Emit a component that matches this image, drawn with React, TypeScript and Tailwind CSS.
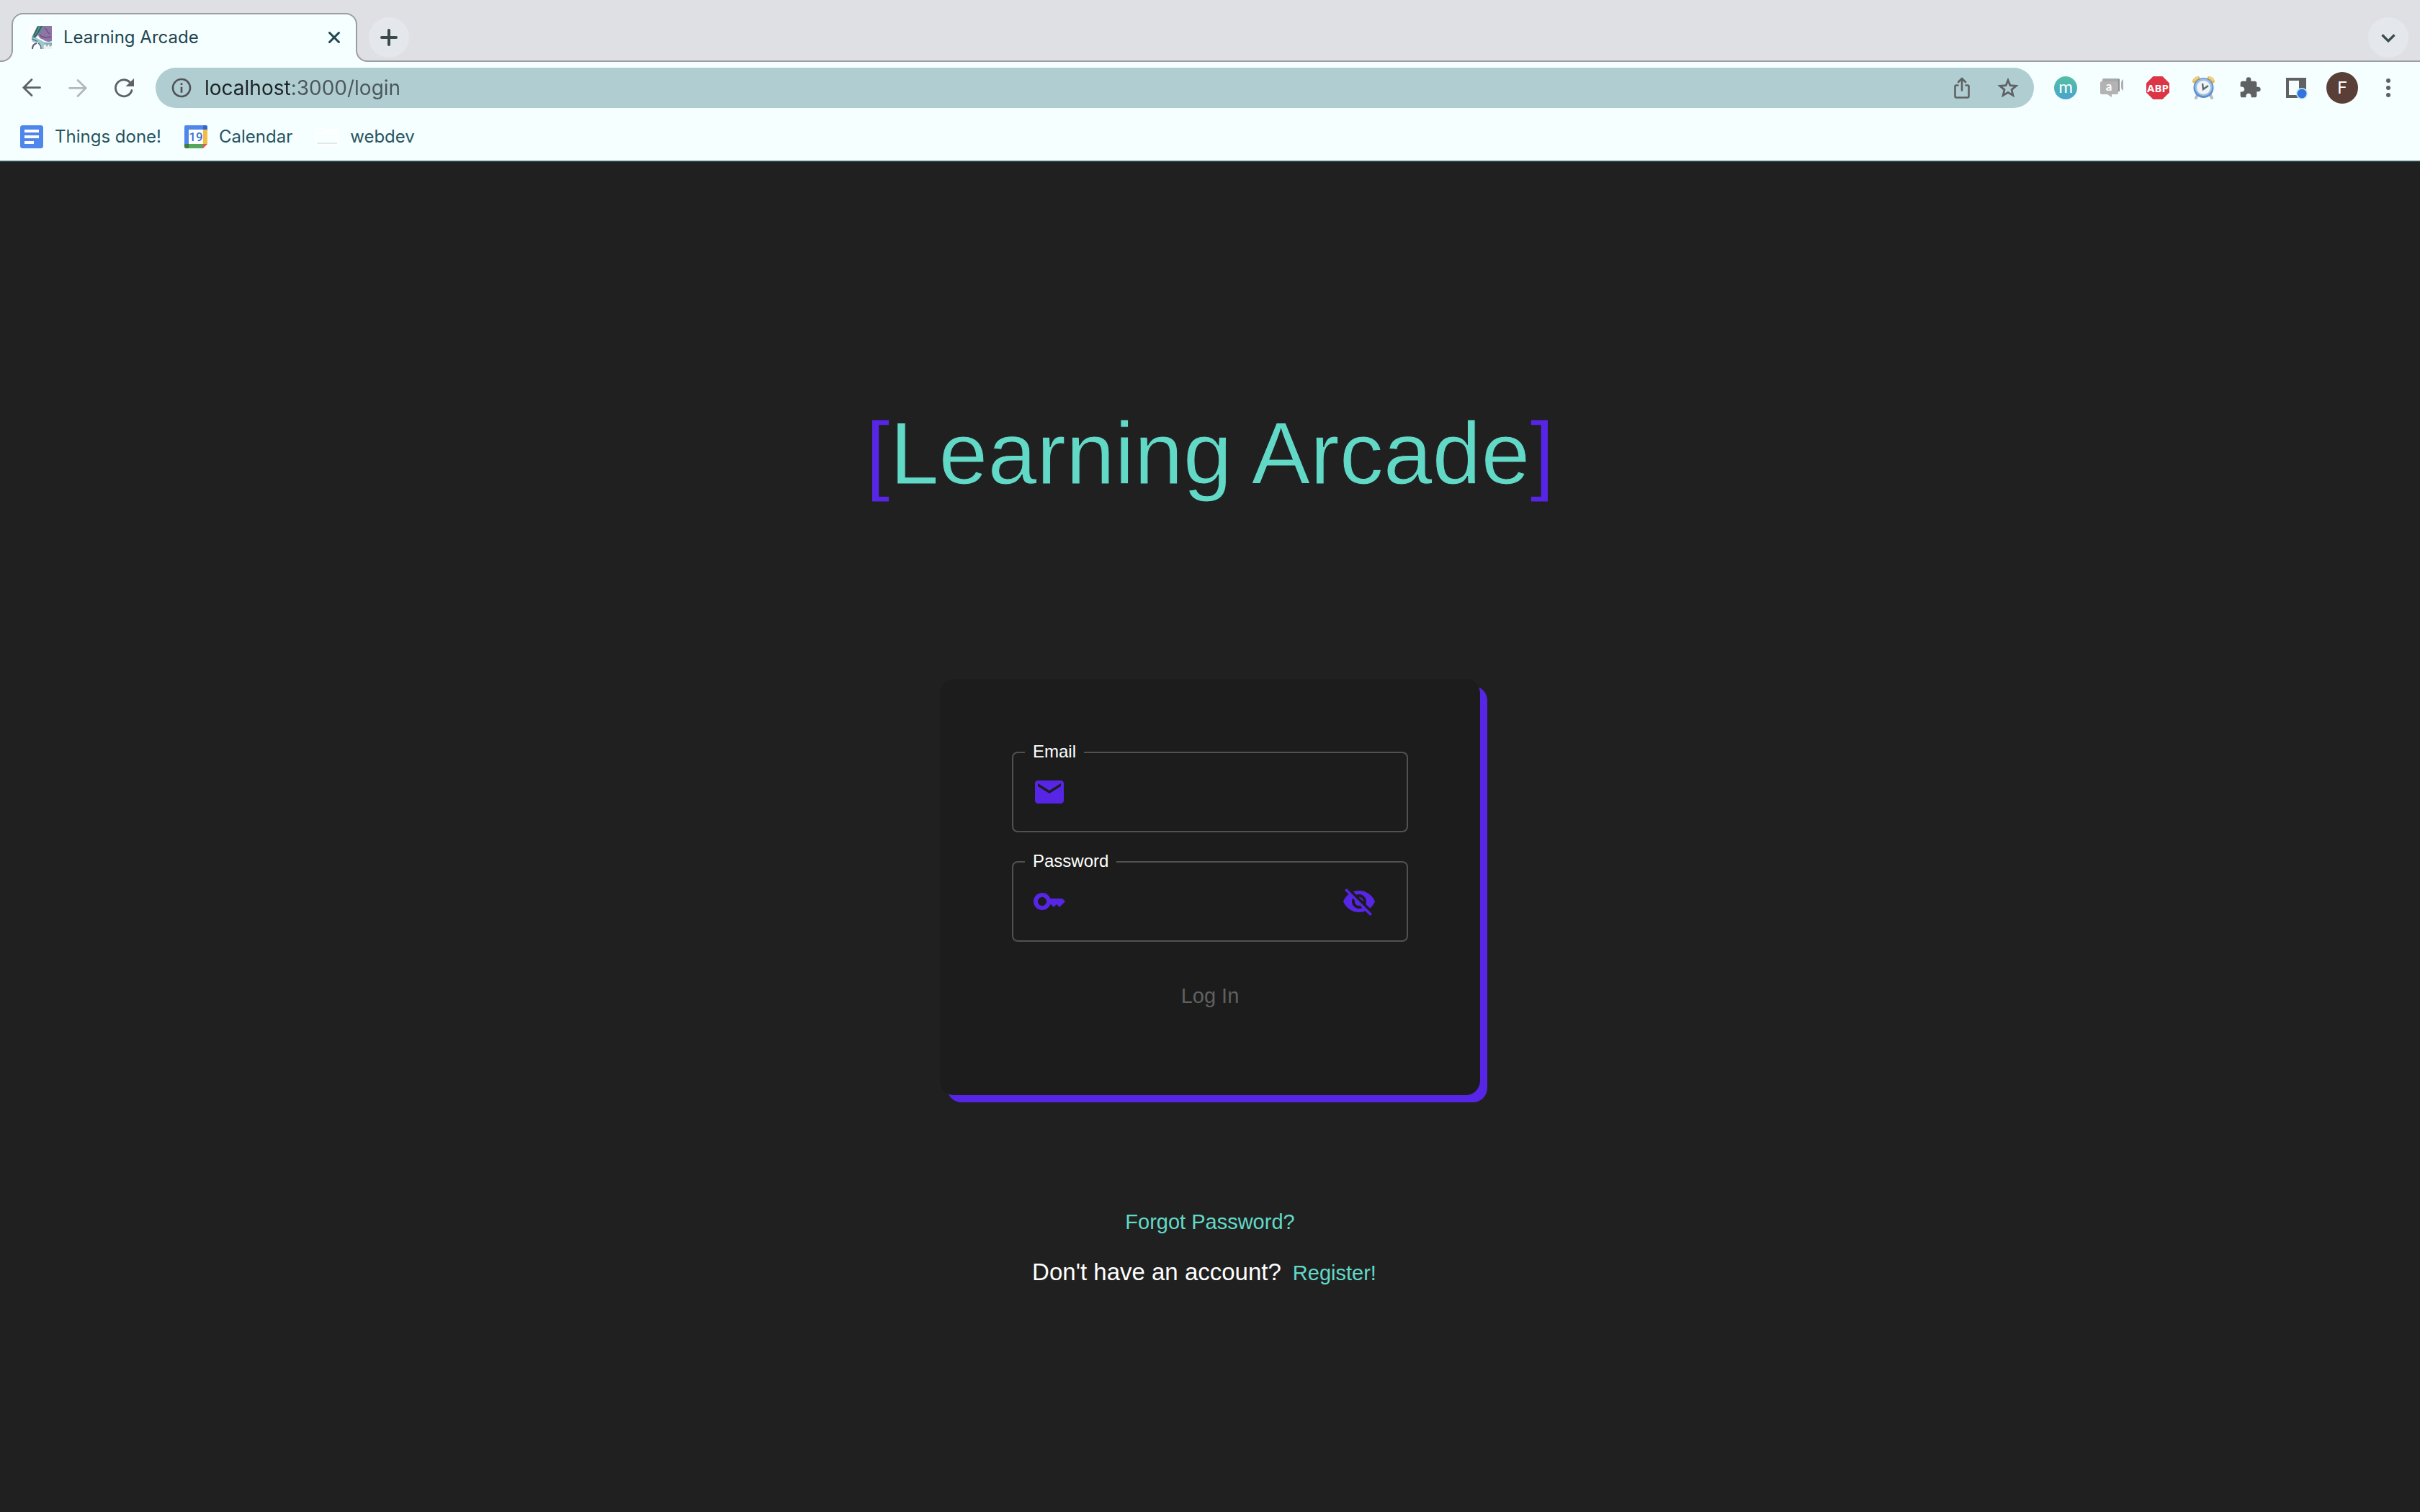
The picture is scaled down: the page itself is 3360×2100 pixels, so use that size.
import { useState } from "react";
import type { ReactNode } from "react";
import { MdEmail, MdExtension, MdInfoOutline, MdVisibilityOff } from "react-icons/md";

function Favicon() {
  return (
    <svg viewBox="0 0 32 32" className="size-8 shrink-0" aria-hidden="true">
      <rect width="32" height="32" fill="#fdfdfd" />
      <path d="M14 0h18v21c-4 2-9 1-12-2-4-1-7-4-7-7z" fill="#8f75a3" />
      <path d="M22 3c4 1 3 7 7 8M15 12c3 4 9 5 16 3" stroke="#6d527f" strokeWidth="1.5" fill="none" />
      <path d="M12 0h10l-6 9-8 9-4-2 4-8z" fill="#5a8f92" />
      <path d="M13 1 7 13M18 0l-7 12-4 4" stroke="#2f5b62" strokeWidth="1.5" fill="none" />
      <path d="M4 17c3-1 7-1 9 1 3 2 8 3 10 6l3 8h-9c0-5-3-9-7-9l-5-1z" fill="#9cc7d2" />
      <path d="M4 18c4 1 5 3 8 3" stroke="#4f7f8a" strokeWidth="1.5" fill="none" />
      <path d="M11 24c-4 1-6 4-6 8" stroke="#5a5a78" strokeWidth="2" fill="none" />
      <path d="M13 24c3 2 4 5 4 8" stroke="#56667e" strokeWidth="1.5" fill="none" />
      <path d="M21 23h11v9H21z" fill="#7fb0bb" />
      <path d="M21 32c-1-4 0-6 2-7l2 4 3-4 1 4 3-2v5z" fill="#f3f0e6" />
    </svg>
  );
}

function ArrowIcon({ className }: { className: string }) {
  return (
    <svg viewBox="0 0 32 32" fill="none" stroke="currentColor" strokeWidth="2.8" strokeLinecap="round" strokeLinejoin="miter" className={className} aria-hidden="true">
      <path d="M27.500 15.700H5M16 4.500 4.900 15.700 16 26.600" />
    </svg>
  );
}

function ReloadIcon() {
  return (
    <svg viewBox="0 0 32 32" className="size-8" aria-hidden="true">
      <path d="M27 19.500A11.500 11.500 0 1 1 24 8" fill="none" stroke="#5f6163" strokeWidth="2.800" strokeLinecap="round" />
      <path d="M30 3v11H18.500z" fill="#5f6163" />
    </svg>
  );
}

function ShareIcon() {
  return (
    <svg viewBox="0 0 32 32" fill="none" stroke="#5f6163" strokeWidth="2.600" strokeLinecap="round" strokeLinejoin="round" className="size-8" aria-hidden="true">
      <path d="M10.500 12.500H8A1.500 1.500 0 0 0 6.500 14v14A1.500 1.500 0 0 0 8 29.500h16a1.500 1.500 0 0 0 1.500-1.500V14a1.500 1.500 0 0 0-1.500-1.500h-2.500" />
      <path d="M16 19.500V4M11 8l5-5 5 5" />
    </svg>
  );
}

function StarIcon() {
  return (
    <svg viewBox="0 0 32 32" fill="none" stroke="#5f6163" strokeWidth="2.800" className="size-8" aria-hidden="true">
      <path d="m16 5.500 3 7.200 8.200.7-6.200 5.200 1.900 7.900L16 22.300l-6.900 4.200 1.900-7.900-6.200-5.200 8.200-.7z" />
    </svg>
  );
}

function MeetIcon() {
  return (
    <svg viewBox="0 0 32 32" className="size-8" aria-hidden="true">
      <rect x="3" y="3" width="24" height="18" rx="2" fill="#a9a9a9" />
      <path d="M25 4h2v17h-3v-3z" fill="#8f8f8f" />
      <path d="M32 4v16c-2-1-3-3-3-5V9c0-2 1-4 3-5z" fill="#b0b0b0" />
      <path d="M2 7h21a2 2 0 0 1 2 2v14a2 2 0 0 1-2 2h-7v4l-6-4H2a2 2 0 0 1-2-2V9a2 2 0 0 1 2-2z" fill="#b3b3b3" />
      <text x="12" y="20" textAnchor="middle" fontSize="17" fontWeight="700" fill="#fff" fontFamily="Lato, sans-serif">a</text>
    </svg>
  );
}

function AdBlockIcon() {
  return (
    <svg viewBox="0 0 32 32" className="size-8" aria-hidden="true">
      <path d="M9.500 0h13L32 9.500v13L22.500 32h-13L0 22.500v-13z" fill="#dc3545" />
      <text x="16" y="22" textAnchor="middle" fontSize="15" fontWeight="700" fill="#fff" fontFamily="'Open Sans', sans-serif">ABP</text>
    </svg>
  );
}

function ClockIcon() {
  return (
    <svg viewBox="0 0 32 32" className="size-8" aria-hidden="true">
      <path d="m7 26-2 4M25 26l2 4" stroke="#b9bcc0" strokeWidth="4" strokeLinecap="round" />
      <path d="M0 8C0 3 4 0 9 0l2 3-8 7zM31 8c0-5-4-8-9-8l-2 3 8 7z" fill="#eab84e" />
      <path d="M2 6c1-2 3-4 6-4M29 6c-1-2-3-4-6-4" stroke="#f6d98e" strokeWidth="2" fill="none" />
      <circle cx="15.500" cy="16" r="14" fill="#5e8fca" />
      <circle cx="15.500" cy="15" r="12" fill="#9dbfe6" />
      <circle cx="15.500" cy="15.500" r="9.500" fill="#f1f4f6" />
      <path d="m14 10 1 8 7-5" stroke="#5b6a68" strokeWidth="2.400" fill="none" />
    </svg>
  );
}

function SidePanelIcon() {
  return (
    <svg viewBox="0 0 32 32" className="size-8" aria-hidden="true">
      <path d="M2 2h28v28H2z" fill="#5f6163" />
      <path d="M6 6h14v20H6z" fill="#f5ffff" />
      <circle cx="24" cy="24" r="8" fill="#c5eaf2" />
      <circle cx="24" cy="24" r="6.500" fill="#3273e0" />
    </svg>
  );
}

function DocsIcon() {
  return (
    <svg viewBox="0 0 32 32" className="size-8" aria-hidden="true">
      <rect width="32" height="32" rx="3.500" fill="#4f86ec" />
      <path d="M6 6h20v4H6zM6 14h20v4H6zM6 22h13v4H6z" fill="#fff" />
    </svg>
  );
}

function CalendarIcon() {
  return (
    <svg viewBox="0 0 32 32" className="size-8" aria-hidden="true">
      <path d="M2 0h24v6H6v20H0V2a2 2 0 0 1 2-2z" fill="#4f86ec" />
      <path d="M26 0h4a2 2 0 0 1 2 2v4h-6z" fill="#2f66cc" />
      <path d="M26 6h6v20h-6z" fill="#f2bd42" />
      <path d="M6 26h20v6H6z" fill="#58a65c" />
      <path d="M0 26h6v6H2a2 2 0 0 1-2-2z" fill="#3b7d3e" />
      <path d="M26 26h6l-6 6z" fill="#e8554a" />
      <path d="M6 6h20v20H6z" fill="#fff" />
      <text x="16" y="22" textAnchor="middle" fontSize="17" fontWeight="500" fill="#3b6fd4" fontFamily="Roboto, sans-serif">19</text>
    </svg>
  );
}

function FolderIcon() {
  return (
    <svg viewBox="0 0 32 32" className="size-8" aria-hidden="true">
      <path d="M1 4h9l3 3h18v21H1z" fill="#f8ffff" stroke="#fff" strokeWidth="2" />
      <path d="M2 11h28" stroke="#fff" strokeWidth="2" />
      <path d="M2 25h28" stroke="#dfe9e9" strokeWidth="2" />
    </svg>
  );
}

function KeyIcon() {
  return (
    <svg viewBox="0 0 24 24" fill="#5725e5" className="size-12 shrink-0" aria-hidden="true">
      <path d="M21 10h-8.350C11.830 7.670 9.610 6 7 6c-3.310 0-6 2.690-6 6s2.690 6 6 6c2.610 0 4.830-1.670 5.650-4H13l2 2 2-2 2 2 4-4.040L21 10zM7 15c-1.650 0-3-1.350-3-3s1.350-3 3-3 3 1.350 3 3-1.350 3-3 3z" />
    </svg>
  );
}

function ToolButton({ label, children }: { label: string; children: ReactNode }) {
  return (
    <button type="button" aria-label={label} className="flex size-8 shrink-0 items-center justify-center">
      {children}
    </button>
  );
}

function TabStrip() {
  return (
    <div className="flex h-[86px] items-end bg-[#dfe0e4] pl-4">
      <div className="relative flex h-[68px] w-[480px] items-center rounded-t-2xl border-2 border-b-0 border-[#9d9da1] bg-[#f5ffff] pr-5 pb-0.5 pl-[22px]">
        <span className="absolute bottom-0 -left-[18px] size-[18px] bg-[#f5ffff]">
          <span className="block size-full rounded-br-2xl border-r-2 border-b-2 border-[#9d9da1] bg-[#dfe0e4]" />
        </span>
        <span className="absolute -right-[18px] bottom-0 size-[18px] bg-[#f5ffff]">
          <span className="block size-full rounded-bl-2xl border-b-2 border-l-2 border-[#9d9da1] bg-[#dfe0e4]" />
        </span>
        <Favicon />
        <span className="ml-4 flex-1 text-2xl text-[#1f4650]">Learning Arcade</span>
        <button type="button" aria-label="Close tab" className="flex size-5 items-center justify-center">
          <svg viewBox="0 0 20 20" stroke="#1f4650" strokeWidth="3" strokeLinecap="round" className="size-5" aria-hidden="true">
            <path d="m3.500 3.500 13 13M16.500 3.500l-13 13" />
          </svg>
        </button>
      </div>
      <div className="flex flex-1 items-center justify-between self-stretch border-b-2 border-[#9d9da1] pt-5 pr-4 pl-4">
        <button type="button" aria-label="New tab" className="flex size-14 items-center justify-center rounded-full bg-[#e4e7eb]">
          <svg viewBox="0 0 24 24" stroke="#3b4b4d" strokeWidth="4" strokeLinecap="round" className="size-6" aria-hidden="true">
            <path d="M12 2v20M2 12h20" />
          </svg>
        </button>
        <button type="button" aria-label="Search tabs" className="flex size-14 items-center justify-center rounded-full bg-[#e4e7eb]">
          <svg viewBox="0 0 24 24" fill="none" stroke="#3b4b4d" strokeWidth="3.200" className="size-6" aria-hidden="true">
            <path d="m3.500 8.500 8.500 8.500 8.500-8.500" />
          </svg>
        </button>
      </div>
    </div>
  );
}

function Toolbar() {
  return (
    <div className="flex h-[72px] items-center gap-7 px-7">
      <div className="flex gap-8">
        <ToolButton label="Back"><ArrowIcon className="size-8 text-[#5f6163]" /></ToolButton>
        <ToolButton label="Forward"><ArrowIcon className="size-8 rotate-180 text-[#b4b8ba]" /></ToolButton>
        <ToolButton label="Reload"><ReloadIcon /></ToolButton>
      </div>
      <div className="flex h-14 flex-1 items-center rounded-full bg-[#b0cdd1] px-5">
        <ToolButton label="Site information"><MdInfoOutline className="size-8 text-[#4f5257]" /></ToolButton>
        <input
          type="text"
          aria-label="Address"
          defaultValue="localhost:3000/login"
          className="ml-4 h-14 flex-1 bg-[linear-gradient(90deg,#1c2224_121px,#4b5659_121px)] bg-clip-text text-[28px] text-transparent outline-none"
        />
        <div className="flex gap-8">
          <ToolButton label="Share this page"><ShareIcon /></ToolButton>
          <ToolButton label="Bookmark this page"><StarIcon /></ToolButton>
        </div>
      </div>
      <div className="flex items-center gap-8">
        <ToolButton label="M extension">
          <span className="flex size-8 items-center justify-center rounded-full bg-linear-to-b from-[#56bfa2] to-[#4aa3cc] pb-1 font-[Lato,sans-serif] text-2xl leading-none text-white">m</span>
        </ToolButton>
        <ToolButton label="Meeting extension"><MeetIcon /></ToolButton>
        <ToolButton label="Ad blocker"><AdBlockIcon /></ToolButton>
        <ToolButton label="Alarm clock"><ClockIcon /></ToolButton>
        <ToolButton label="Extensions"><MdExtension className="size-8 text-[#5f6163]" /></ToolButton>
        <ToolButton label="Side panel"><SidePanelIcon /></ToolButton>
        <ToolButton label="Profile">
          <span className="flex size-11 shrink-0 items-center justify-center rounded-full bg-[#593f37] font-[Roboto,sans-serif] text-2xl text-white">F</span>
        </ToolButton>
        <ToolButton label="Menu">
          <svg viewBox="0 0 32 32" fill="#5f6163" className="size-8" aria-hidden="true">
            <circle cx="16" cy="6" r="3" />
            <circle cx="16" cy="16" r="3" />
            <circle cx="16" cy="26" r="3" />
          </svg>
        </ToolButton>
      </div>
    </div>
  );
}

function BookmarksBar() {
  const items = [
    { name: "Things done!", icon: <DocsIcon /> },
    { name: "Calendar", icon: <CalendarIcon /> },
    { name: "webdev", icon: <FolderIcon /> },
  ];
  return (
    <nav aria-label="Bookmarks" className="flex h-[66px] items-center gap-8 border-b-2 border-[#b0cdd1] px-7">
      {items.map((item) => (
        <a key={item.name} href="#" className="flex items-center gap-4 text-2xl text-[#26535f]">
          {item.icon}
          {item.name}
        </a>
      ))}
    </nav>
  );
}

function Field({ id, label, type, icon, action }: { id: string; label: string; type: string; icon: ReactNode; action?: ReactNode }) {
  return (
    <fieldset className="min-w-0 rounded-lg border-2 border-[#515151] px-4 pb-[13px]">
      <legend className="h-7 px-[11px] text-2xl leading-[26px] text-white">
        <label htmlFor={id}>{label}</label>
      </legend>
      <div className="flex h-[82px] items-center gap-4 pr-[26px] pl-2.5">
        {icon}
        <input id={id} type={type} className="h-full min-w-0 flex-1 bg-transparent text-[32px] text-white outline-none" />
        {action}
      </div>
    </fieldset>
  );
}

function LoginForm() {
  const [visible, setVisible] = useState(false);
  return (
    <form className="w-[750px] rounded-[20px] bg-[#1c1c1c] px-[100px] pt-[88px] pb-[101px] shadow-[10px_10px_0_#5725e5]">
      <div className="flex flex-col gap-[27px]">
        <Field id="email" label="Email" type="email" icon={<MdEmail className="size-12 shrink-0 text-[#5725e5]" />} />
        <Field
          id="password"
          label="Password"
          type={visible ? "text" : "password"}
          icon={<KeyIcon />}
          action={
            <button type="button" aria-label="Toggle password visibility" onClick={() => setVisible(!visible)}>
              <MdVisibilityOff className="size-12 text-[#5725e5]" />
            </button>
          }
        />
      </div>
      <button type="submit" disabled className="mx-auto mt-10 block h-[72px] px-4 text-[29px] text-[#606060]">
        Log In
      </button>
    </form>
  );
}

export default function App() {
  return (
    <div className="flex min-h-screen flex-col bg-[#202020]">
      <header className="bg-[#f5ffff] font-[Inter,sans-serif]">
        <TabStrip />
        <Toolbar />
        <BookmarksBar />
      </header>
      <main className="flex flex-1 flex-col items-center pt-[336px] font-['Liberation_Sans',sans-serif]">
        <h1 className="text-[122px] leading-[140px] text-[#62d9c7] [-webkit-text-stroke:1px_#202020]">
          <span className="text-[#5725e5]">[</span>Learning Arcade<span className="text-[#5725e5]">]</span>
        </h1>
        <div className="mt-[243px]">
          <LoginForm />
        </div>
        <a href="#" className="mt-[156px] text-[29px] leading-10 text-[#62d9c7]">Forgot Password?</a>
        <p className="mt-[30px] flex items-baseline gap-4 pr-4 text-[33px] leading-10 text-white">
          Don't have an account?
          <a href="#" className="text-[29px] text-[#62d9c7]">Register!</a>
        </p>
      </main>
    </div>
  );
}
